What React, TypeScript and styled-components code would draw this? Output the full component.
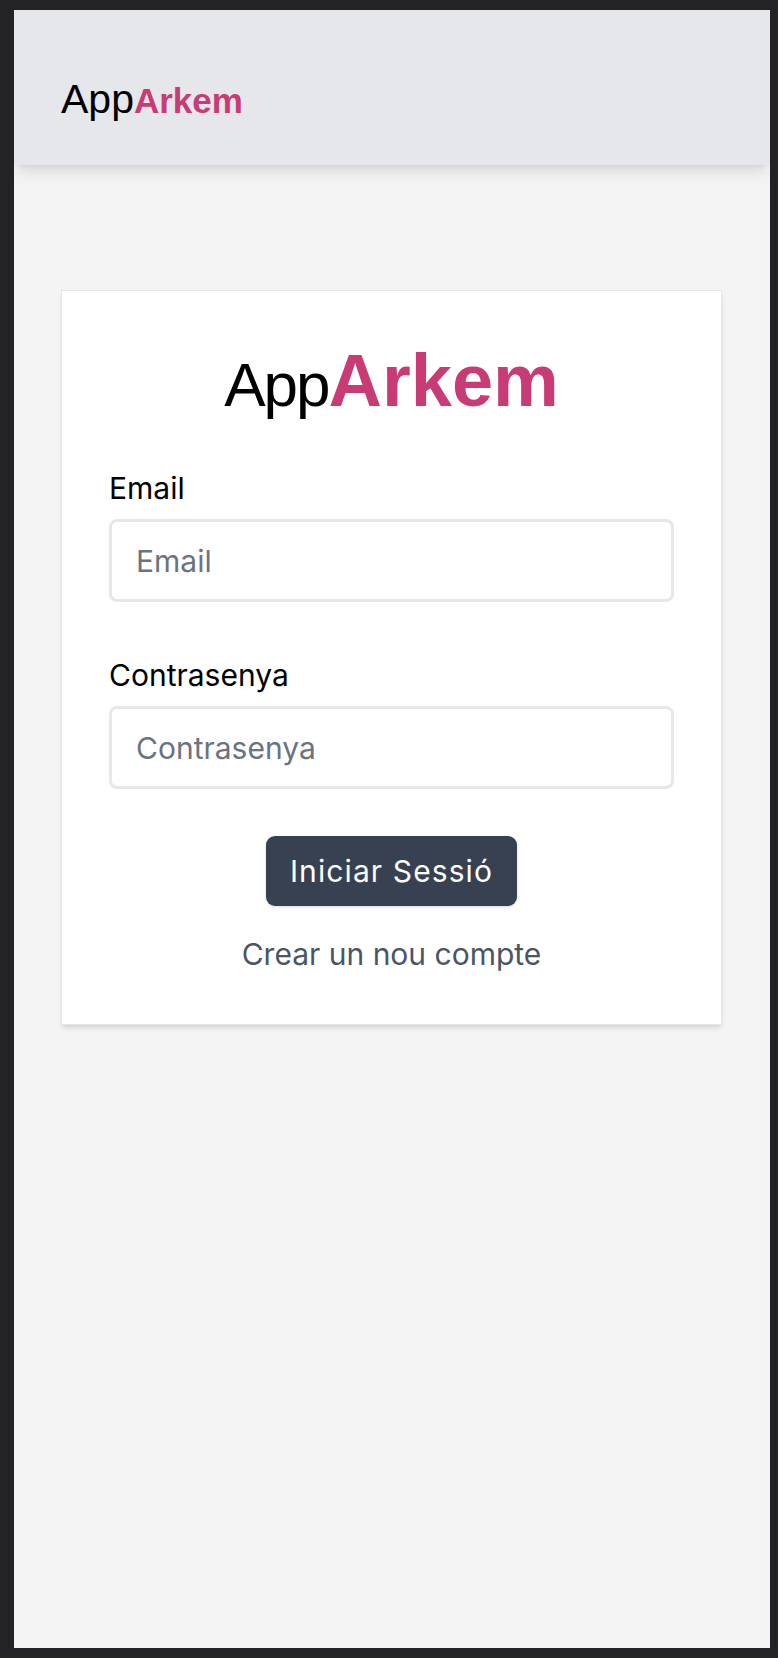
import styled, { createGlobalStyle } from "styled-components"

const GlobalStyle = createGlobalStyle`
  html, body {
    margin: 0;
    padding: 0;
    background-color: #232325;
  }
  * {
    box-sizing: border-box;
  }
`

const StyledScreen = styled.div`
  width: 778px;
  height: 1658px;
  padding: 10px 8px 10px 14px;
  background-color: #232325;
`

const StyledFrame = styled.div`
  width: 756px;
  height: 100%;
  background-color: #f4f4f5;
  display: flex;
  flex-direction: column;
  overflow: hidden;
  font-family: Inter, "Noto Sans", sans-serif;
`

const StyledHeader = styled.header`
  height: 155px;
  flex-shrink: 0;
  display: flex;
  align-items: center;
  padding: 24px 47px 0;
  background-color: #e5e7eb;
  box-shadow: 0 10px 15px -3px rgba(0, 0, 0, 0.1),
    0 4px 6px -4px rgba(0, 0, 0, 0.1);
  position: relative;
  z-index: 1;
`

const StyledLogo = styled.div<{ $size: number }>`
  font-family: "Liberation Sans", Arial, sans-serif;
  font-size: ${(p) => p.$size}px;
  line-height: 1;
  white-space: nowrap;
`

const StyledLogoApp = styled.span<{ $size: number; $tracking?: number }>`
  font-size: ${(p) => p.$size}px;
  font-weight: 400;
  color: #000;
  letter-spacing: ${(p) => p.$tracking ?? 0}px;
`

const StyledLogoBrand = styled.span<{ $size: number }>`
  font-size: ${(p) => p.$size}px;
  font-weight: 700;
  color: #c93b75;
`

const StyledCard = styled.form`
  margin: 125px 48px 0 47px;
  padding: 53px 47px 52px;
  background-color: #fff;
  border: 1px solid #e5e7eb;
  box-shadow: 0 4px 6px -1px rgba(0, 0, 0, 0.1),
    0 2px 4px -2px rgba(0, 0, 0, 0.1);
  display: flex;
  flex-direction: column;
`

const StyledCardLogo = styled.div`
  display: flex;
  justify-content: center;
  margin-bottom: 52px;
`

const StyledField = styled.div`
  display: flex;
  flex-direction: column;
  gap: 13px;
  & + & {
    margin-top: 55px;
  }
`

const StyledLabel = styled.label`
  font-size: 30px;
  line-height: 36px;
  color: #000;
`

const StyledInput = styled.input`
  width: 100%;
  height: 83px;
  padding: 0 24px;
  border: 3px solid #e5e7eb;
  border-radius: 8px;
  font-family: Inter, "Noto Sans", sans-serif;
  font-size: 30px;
  color: #111827;
  background: #fff;
  outline: none;

  &::placeholder {
    color: #6b7280;
  }
`

const StyledButton = styled.button`
  align-self: center;
  margin-top: 47px;
  padding: 17px 24px;
  border: none;
  border-radius: 9px;
  background-color: #374151;
  color: #fff;
  font-family: Inter, "Noto Sans", sans-serif;
  font-size: 30px;
  line-height: 36px;
  letter-spacing: 1.1px;
  box-shadow: 0 1px 3px rgba(0, 0, 0, 0.15);
  cursor: pointer;
`

const StyledLink = styled.a`
  align-self: center;
  margin-top: 30px;
  font-size: 30px;
  line-height: 36px;
  color: #4b5563;
  text-decoration: none;
`

const Logo = ({ app, brand, tracking }: { app: number; brand: number; tracking?: number }) => (
  <StyledLogo $size={Math.max(app, brand)}>
    <StyledLogoApp $size={app} $tracking={tracking}>
      App
    </StyledLogoApp>
    <StyledLogoBrand $size={brand}>Arkem</StyledLogoBrand>
  </StyledLogo>
)

export default function App() {
  return (
    <>
      <GlobalStyle />
      <StyledScreen>
        <StyledFrame>
          <StyledHeader>
            <Logo app={41} brand={35} />
          </StyledHeader>
          <StyledCard onSubmit={(e) => e.preventDefault()}>
            <StyledCardLogo>
              <Logo app={62} brand={74} tracking={-2} />
            </StyledCardLogo>
            <StyledField>
              <StyledLabel htmlFor="email">Email</StyledLabel>
              <StyledInput id="email" type="email" placeholder="Email" />
            </StyledField>
            <StyledField>
              <StyledLabel htmlFor="password">Contrasenya</StyledLabel>
              <StyledInput id="password" type="password" placeholder="Contrasenya" />
            </StyledField>
            <StyledButton type="submit">Iniciar Sessió</StyledButton>
            <StyledLink href="#">Crear un nou compte</StyledLink>
          </StyledCard>
        </StyledFrame>
      </StyledScreen>
    </>
  )
}
